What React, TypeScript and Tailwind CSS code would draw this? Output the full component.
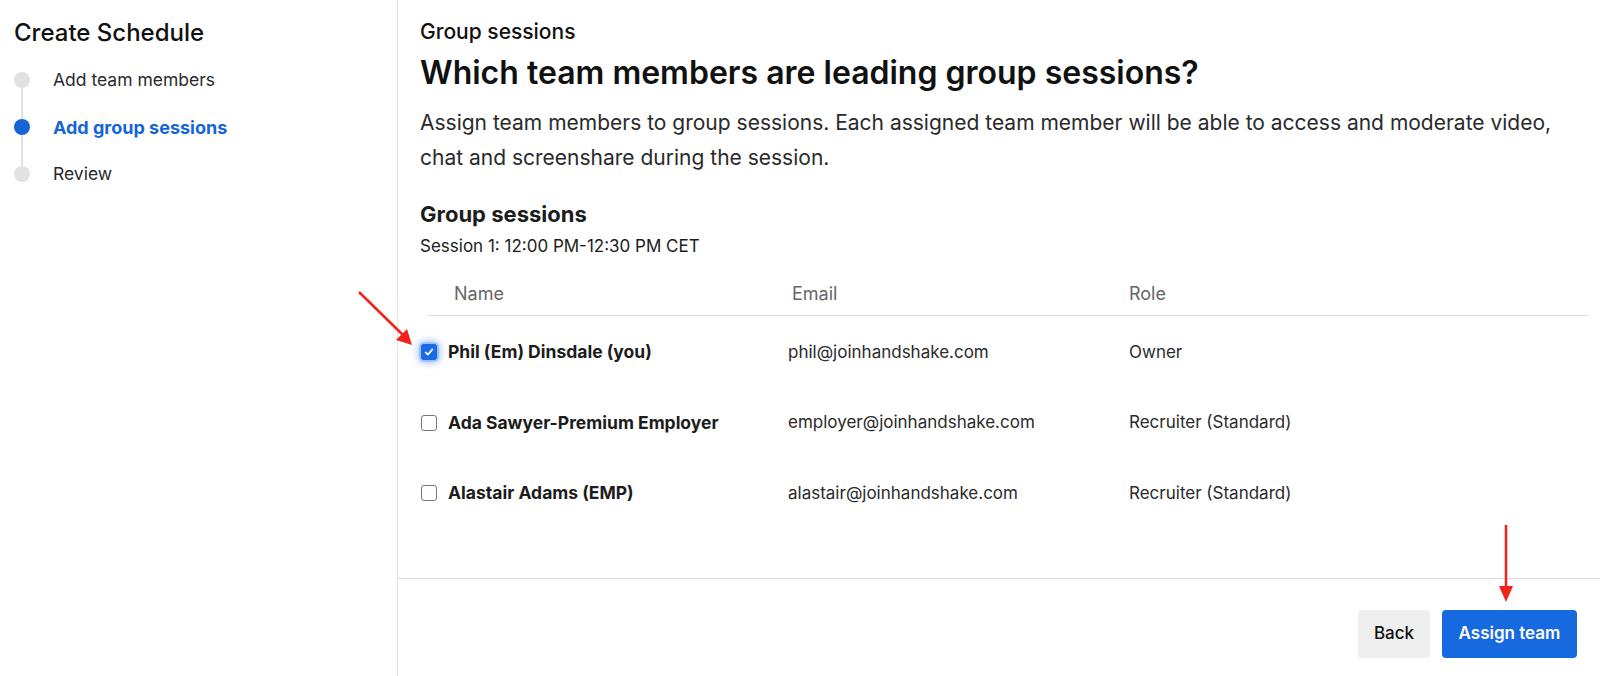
import React, { useState } from 'react';

const steps = [
  { label: 'Add team members', state: 'done' },
  { label: 'Add group sessions', state: 'active' },
  { label: 'Review', state: 'todo' },
];

const members = [
  { name: 'Phil (Em) Dinsdale (you)', email: 'phil@joinhandshake.com', role: 'Owner' },
  { name: 'Ada Sawyer-Premium Employer', email: 'employer@joinhandshake.com', role: 'Recruiter (Standard)' },
  { name: 'Alastair Adams (EMP)', email: 'alastair@joinhandshake.com', role: 'Recruiter (Standard)' },
];

function Checkbox({ checked, onChange }: { checked: boolean; onChange: () => void }) {
  return (
    <button
      onClick={onChange}
      className={
        checked
          ? 'w-4 h-4 shrink-0 rounded-[3px] bg-[#1a6ae6] flex items-center justify-center shadow-[0_0_0_2px_rgba(26,106,230,0.2),0_0_7px_3px_rgba(26,106,230,0.4)]'
          : 'w-4 h-4 shrink-0 rounded-[3px] border border-[#777] bg-white'
      }
    >
      {checked && (
        <svg viewBox="0 0 16 16" className="w-3 h-3">
          <path d="M3.5 8.5l3 3 6-7" fill="none" stroke="white" strokeWidth="2.2" strokeLinecap="round" strokeLinejoin="round" />
        </svg>
      )}
    </button>
  );
}

export default function App() {
  const [selected, setSelected] = useState<number[]>([0]);
  const toggle = (i: number) =>
    setSelected((s) => (s.includes(i) ? s.filter((x) => x !== i) : [...s, i]));

  return (
    <div className="relative flex w-[1600px] h-[676px] bg-white text-[#1c1c1c]" style={{ fontFamily: 'Inter, "Noto Sans", sans-serif' }}>
      {/* Sidebar */}
      <aside className="w-[398px] shrink-0 border-r border-[#e2e2e2] pl-[14px] pt-[18px]">
        <h1 className="text-[24px] leading-[30px] font-medium text-[#111]">Create Schedule</h1>
        <div className="mt-[24px]">
          {steps.map((s, i) => (
            <div key={s.label}>
              <div className="flex items-center h-[16px]">
                <div className={s.state === 'active' ? 'w-4 h-4 rounded-full bg-[#1565d8]' : 'w-4 h-4 rounded-full bg-[#e2e2e2]'} />
                <span className={s.state === 'active' ? 'ml-[23px] text-[18px] font-bold text-[#1565d8]' : 'ml-[23px] text-[17.5px] text-[#2a2a2a]'}>
                  {s.label}
                </span>
              </div>
              {i < steps.length - 1 && <div className="ml-[7px] w-[2px] h-[31px] bg-[#e2e2e2]" />}
            </div>
          ))}
        </div>
      </aside>

      {/* Main */}
      <main className="flex-1 flex flex-col min-w-0">
        <div className="flex-1 pl-[22px] pr-[12px] pt-[19px]">
          <div className="text-[21px] leading-[26px] font-medium text-[#111]">Group sessions</div>
          <h2 className="mt-[8px] text-[32px] leading-[40px] font-semibold text-[#111]">
            Which team members are leading group sessions?
          </h2>
          <p className="mt-[12px] text-[21px] leading-[35px] text-[#2a2a2a]">
            Assign team members to group sessions. Each assigned team member will be able to access and moderate video, chat and screenshare during the session.
          </p>

          <h3 className="mt-[24px] text-[22px] leading-[30px] font-bold text-[#1c1c1c]">Group sessions</h3>
          <div className="mt-[6px] text-[17px] leading-[22px] text-[#1c1c1c]">Session 1: 12:00 PM-12:30 PM CET</div>

          <div className="mt-[14px]">
            <div className="ml-[8px] grid grid-cols-[364px_337px_1fr] h-[45px] items-center border-b border-[#dcdcdc] text-[18px] text-[#666]">
              <span className="pl-[26px]">Name</span>
              <span>Email</span>
              <span>Role</span>
            </div>
            {members.map((m, i) => (
              <div key={m.email} className="grid grid-cols-[368px_341px_1fr] h-[70.5px] pt-[2px] items-center text-[17px]">
                <div className="flex items-center gap-[11px] pl-[1px]">
                  <Checkbox checked={selected.includes(i)} onChange={() => toggle(i)} />
                  <span className="font-bold text-[17.5px] text-[#1c1c1c]">{m.name}</span>
                </div>
                <span className="text-[#2a2a2a]">{m.email}</span>
                <span className="text-[#2a2a2a]">{m.role}</span>
              </div>
            ))}
          </div>
        </div>

        <div className="h-[98px] border-t border-[#dcdcdc] flex justify-end items-start gap-[12px] pt-[31px] pr-[23px]">
          <button className="h-[48px] w-[72px] rounded-[4px] bg-[#efefef] text-[17px] font-medium text-[#111]">Back</button>
          <button className="h-[48px] w-[135px] rounded-[4px] bg-[#1769e0] text-[17px] font-semibold text-white">Assign team</button>
        </div>
      </main>

      {/* Annotation arrows */}
      <svg className="absolute left-0 top-0 pointer-events-none" width="1600" height="676">
        <line x1="359" y1="292" x2="404" y2="336" stroke="#f2231a" strokeWidth="2.5" />
        <polygon points="412,345 396,340 407,329" fill="#f2231a" />
        <line x1="1506" y1="525" x2="1506" y2="588" stroke="#f2231a" strokeWidth="2.5" />
        <polygon points="1506,602 1499,586 1513,586" fill="#f2231a" />
      </svg>
    </div>
  );
}
